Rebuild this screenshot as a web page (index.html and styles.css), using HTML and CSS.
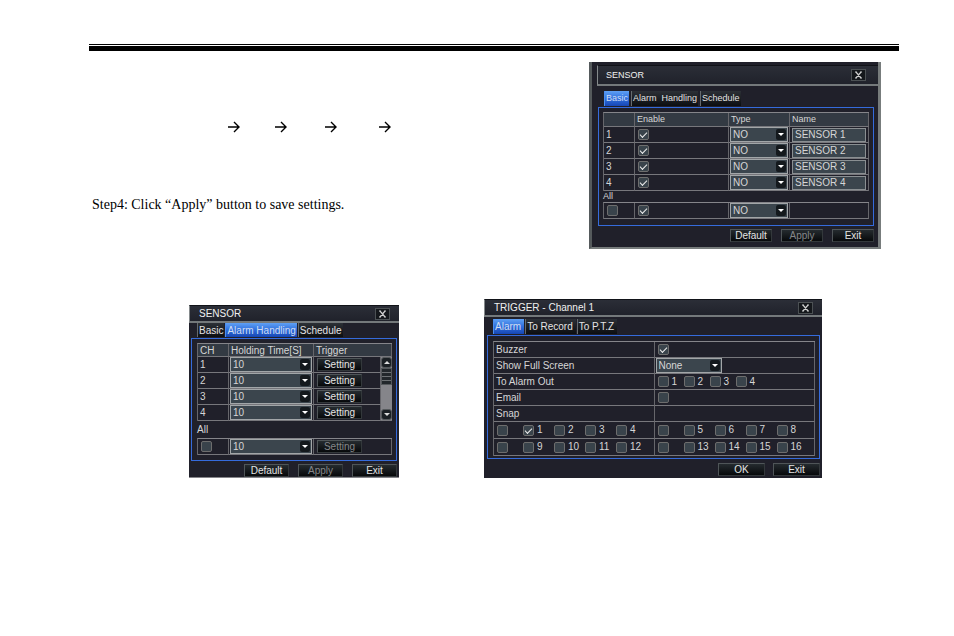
FILE: index.html
```html
<!DOCTYPE html>
<html lang="en">
<head>
    <meta charset="UTF-8">
    <title>Sensor settings</title>
    <link rel="stylesheet" href="styles.css">
</head>
<body>
    <div class="page">
        <hr class="rule">
        <div class="top">
            <div class="text">
                <p class="path">
                    <svg width="13" height="12" viewBox="0 0 13 12"><path d="M0 6H11M6 1L11 6L6 11"/></svg>
                    <svg width="13" height="12" viewBox="0 0 13 12"><path d="M0 6H11M6 1L11 6L6 11"/></svg>
                    <svg width="13" height="12" viewBox="0 0 13 12"><path d="M0 6H11M6 1L11 6L6 11"/></svg>
                    <svg width="13" height="12" viewBox="0 0 13 12"><path d="M0 6H11M6 1L11 6L6 11"/></svg>
                </p>
                <p class="step">Step4: Click “Apply” button to save settings.</p>
            </div>

            <div class="panel basic">
                <div class="title">
                    <span>SENSOR</span>
                    <button class="close" aria-label="Close"><svg width="7" height="8" viewBox="0 0 7 8"><path d="M0 1H2M5 1H7M0 7H2M5 7H7M1 1L6 7M6 1L1 7"/></svg></button>
                </div>
                <div class="body">
                    <div class="tabs">
                        <button class="tab active">Basic</button>
                        <button class="tab">Alarm&nbsp; Handling</button>
                        <button class="tab">Schedule</button>
                    </div>
                    <div class="frame">
                        <table>
                            <colgroup><col class="c-num"><col class="c-enable"><col class="c-type"><col></colgroup>
                            <tr><th></th><th>Enable</th><th>Type</th><th>Name</th></tr>
                            <tr>
                                <td>1</td>
                                <td><input type="checkbox" aria-label="Enable 1" checked></td>
                                <td><span class="pick"><select aria-label="Type 1"><option>NO</option><option>NC</option></select></span></td>
                                <td><input type="text" aria-label="Name 1" value="SENSOR 1"></td>
                            </tr>
                            <tr>
                                <td>2</td>
                                <td><input type="checkbox" aria-label="Enable 2" checked></td>
                                <td><span class="pick"><select aria-label="Type 2"><option>NO</option><option>NC</option></select></span></td>
                                <td><input type="text" aria-label="Name 2" value="SENSOR 2"></td>
                            </tr>
                            <tr>
                                <td>3</td>
                                <td><input type="checkbox" aria-label="Enable 3" checked></td>
                                <td><span class="pick"><select aria-label="Type 3"><option>NO</option><option>NC</option></select></span></td>
                                <td><input type="text" aria-label="Name 3" value="SENSOR 3"></td>
                            </tr>
                            <tr>
                                <td>4</td>
                                <td><input type="checkbox" aria-label="Enable 4" checked></td>
                                <td><span class="pick"><select aria-label="Type 4"><option>NO</option><option>NC</option></select></span></td>
                                <td><input type="text" aria-label="Name 4" value="SENSOR 4"></td>
                            </tr>
                        </table>
                        <label class="all" for="all1">All</label>
                        <table>
                            <colgroup><col class="c-num"><col class="c-enable"><col class="c-type"><col></colgroup>
                            <tr>
                                <td><input type="checkbox" id="all1"></td>
                                <td><input type="checkbox" aria-label="Enable all" checked></td>
                                <td><span class="pick"><select aria-label="Type for all"><option>NO</option><option>NC</option></select></span></td>
                                <td></td>
                            </tr>
                        </table>
                    </div>
                    <div class="actions">
                        <button>Default</button>
                        <button disabled>Apply</button>
                        <button>Exit</button>
                    </div>
                </div>
            </div>
        </div>

        <div class="bottom">
            <div class="panel handling">
                <div class="title">
                    <span>SENSOR</span>
                    <button class="close" aria-label="Close"><svg width="7" height="8" viewBox="0 0 7 8"><path d="M0 1H2M5 1H7M0 7H2M5 7H7M1 1L6 7M6 1L1 7"/></svg></button>
                </div>
                <div class="body">
                    <div class="tabs">
                        <button class="tab">Basic</button>
                        <button class="tab active">Alarm Handling</button>
                        <button class="tab">Schedule</button>
                    </div>
                    <div class="frame">
                        <table>
                            <colgroup><col class="c-num"><col><col class="c-trigger"><col class="c-scroll"></colgroup>
                            <tr><th>CH</th><th>Holding Time[S]</th><th colspan="2">Trigger</th></tr>
                            <tr>
                                <td>1</td>
                                <td><span class="pick"><select aria-label="Holding time 1"><option>10</option><option>20</option></select></span></td>
                                <td><button class="set">Setting</button></td>
                                <td rowspan="4" class="scroll"><div class="bar"><i class="up"></i><i class="thumb"></i><i class="down"></i></div></td>
                            </tr>
                            <tr>
                                <td>2</td>
                                <td><span class="pick"><select aria-label="Holding time 2"><option>10</option><option>20</option></select></span></td>
                                <td><button class="set">Setting</button></td>
                            </tr>
                            <tr>
                                <td>3</td>
                                <td><span class="pick"><select aria-label="Holding time 3"><option>10</option><option>20</option></select></span></td>
                                <td><button class="set">Setting</button></td>
                            </tr>
                            <tr>
                                <td>4</td>
                                <td><span class="pick"><select aria-label="Holding time 4"><option>10</option><option>20</option></select></span></td>
                                <td><button class="set">Setting</button></td>
                            </tr>
                        </table>
                        <label class="all" for="all2">All</label>
                        <table>
                            <colgroup><col class="c-num"><col><col class="c-trigger-wide"></colgroup>
                            <tr>
                                <td><input type="checkbox" id="all2"></td>
                                <td><span class="pick"><select aria-label="Holding time for all"><option>10</option><option>20</option></select></span></td>
                                <td><button class="set" disabled>Setting</button></td>
                            </tr>
                        </table>
                    </div>
                    <div class="actions">
                        <button>Default</button>
                        <button disabled>Apply</button>
                        <button>Exit</button>
                    </div>
                </div>
            </div>

            <div class="panel trigger">
                <div class="title">
                    <span>TRIGGER - Channel 1</span>
                    <button class="close" aria-label="Close"><svg width="7" height="8" viewBox="0 0 7 8"><path d="M0 1H2M5 1H7M0 7H2M5 7H7M1 1L6 7M6 1L1 7"/></svg></button>
                </div>
                <div class="body">
                    <div class="tabs">
                        <button class="tab active">Alarm</button>
                        <button class="tab">To Record</button>
                        <button class="tab">To P.T.Z</button>
                    </div>
                    <div class="frame">
                        <table>
                            <tr><td><label for="buzzer">Buzzer</label></td><td><input type="checkbox" id="buzzer" checked></td></tr>
                            <tr><td><label for="full">Show Full Screen</label></td><td><span class="pick"><select id="full"><option>None</option></select></span></td></tr>
                            <tr>
                                <td>To Alarm Out</td>
                                <td>
                                    <div class="checks out">
                                        <label><input type="checkbox">1</label>
                                        <label><input type="checkbox">2</label>
                                        <label><input type="checkbox">3</label>
                                        <label><input type="checkbox">4</label>
                                    </div>
                                </td>
                            </tr>
                            <tr><td><label for="email">Email</label></td><td><input type="checkbox" id="email"></td></tr>
                            <tr><td>Snap</td><td></td></tr>
                            <tr class="snap">
                                <td>
                                    <div class="checks">
                                        <input type="checkbox" aria-label="Snap 1 to 4">
                                        <label><input type="checkbox" checked>1</label>
                                        <label><input type="checkbox">2</label>
                                        <label><input type="checkbox">3</label>
                                        <label><input type="checkbox">4</label>
                                    </div>
                                </td>
                                <td>
                                    <div class="checks">
                                        <input type="checkbox" aria-label="Snap 5 to 8">
                                        <label><input type="checkbox">5</label>
                                        <label><input type="checkbox">6</label>
                                        <label><input type="checkbox">7</label>
                                        <label><input type="checkbox">8</label>
                                    </div>
                                </td>
                            </tr>
                            <tr class="snap">
                                <td>
                                    <div class="checks">
                                        <input type="checkbox" aria-label="Snap 9 to 12">
                                        <label><input type="checkbox">9</label>
                                        <label><input type="checkbox">10</label>
                                        <label><input type="checkbox">11</label>
                                        <label><input type="checkbox">12</label>
                                    </div>
                                </td>
                                <td>
                                    <div class="checks">
                                        <input type="checkbox" aria-label="Snap 13 to 16">
                                        <label><input type="checkbox">13</label>
                                        <label><input type="checkbox">14</label>
                                        <label><input type="checkbox">15</label>
                                        <label><input type="checkbox">16</label>
                                    </div>
                                </td>
                            </tr>
                        </table>
                    </div>
                    <div class="actions">
                        <button>OK</button>
                        <button>Exit</button>
                    </div>
                </div>
            </div>
        </div>
    </div>
</body>
</html>
```

FILE: styles.css
```css
* {
    box-sizing: border-box;
}
body {
    margin: 0;
    background: #fff;
    color: #000;
    font-family: "Liberation Serif", "Times New Roman", serif;
}
.page {
    padding: 44px 55px 0 89px;
}
.rule {
    height: 7px;
    margin: 0;
    border: 0;
    border-top: 1px solid #000;
    border-bottom: 5px solid #000;
}
.top {
    display: grid;
    grid-template-columns: 500fr 292fr;
    align-items: start;
    padding: 11px 18px 0 0;
}
.bottom {
    display: grid;
    grid-template-columns: 210fr 338fr;
    gap: 85px;
    align-items: end;
    padding: 50px 77px 0 100px;
}

/* instructions */
.text {
    padding: 59px 0 0 3px;
}
.path {
    display: grid;
    grid-template-columns: 47px 50px 54px 13px;
    margin: 0 0 0 136px;
}
.path svg {
    fill: none;
    stroke: #000;
    stroke-width: 1.4;
}
.step {
    margin: 63px 0 0;
    font-size: 14px;
    line-height: 18px;
}

/* windows */
.panel {
    background: #20202a;
    color: #d6d6d6;
    font-family: "Liberation Sans", Arial, sans-serif;
    font-size: 10px;
    line-height: 12px;
}
.panel button, .panel input, .panel select {
    font-family: inherit;
    font-size: 10px;
    line-height: 11px;
    color: inherit;
    margin: 0;
    padding: 0;
    border-radius: 0;
}
.title {
    display: flex;
    align-items: center;
    justify-content: space-between;
    height: 18px;
    padding: 0 9px;
    border-top: 1px solid #111318;
    border-left: 1px solid #858a8c;
    border-bottom: 2px solid #74797b;
    background: linear-gradient(#2b2e37, #20222b);
    color: #f0f0f0;
}
.panel .close {
    display: flex;
    align-items: center;
    justify-content: center;
    width: 15px;
    height: 12px;
    border: 1px solid #4c5154;
    background: #15181c;
}
.close svg {
    fill: none;
    stroke: #d0d0d0;
    stroke-width: 1.2;
}
.tabs {
    display: flex;
    gap: 1px;
    height: 15px;
    padding: 0 0 1px 6px;
}
.panel .tab {
    padding: 0 1px;
    border: 0;
    border-left: 1px solid #666b6e;
    background: linear-gradient(#2c3036, #0c0e11);
    color: #e4e4e4;
    white-space: nowrap;
}
.panel .tab.active {
    border-color: #4c8ff0;
    background: linear-gradient(#5fa0f4, #2f6fdd 50%, #1746b4);
    color: #cfdcf2;
}
.frame {
    padding: 4px 4px 5px 5px;
    border: 1px solid #356bdc;
}
table {
    width: 100%;
    table-layout: fixed;
    border-spacing: 0;
    border-top: 1px solid #85858a;
    border-left: 1px solid #66666b;
}
td, th {
    height: 16px;
    padding: 0;
    border-right: 1px solid #66666b;
    border-bottom: 1px solid #77777c;
    font-weight: normal;
    text-align: left;
    text-indent: 2px;
}
td {
    font-size: 10px;
}
th {
    height: 13px;
    background: #333a43;
    line-height: 11px;
}
.c-num {
    width: 31px;
}
.c-enable {
    width: 94px;
}
.c-type {
    width: 61px;
}
.c-trigger {
    width: 67px;
}
.c-trigger-wide {
    width: 78px;
}
.c-scroll {
    width: 11px;
}
.all {
    display: block;
}

/* controls */
.panel input[type="checkbox"] {
    appearance: none;
    display: block;
    flex: none;
    width: 11px;
    height: 11px;
    margin-left: 3px;
    border: 1px solid #6d6d6d;
    border-radius: 2px;
    background: #39434b;
}
.panel input[type="checkbox"]:checked::after {
    content: "";
    display: block;
    width: 6px;
    height: 3px;
    margin: 2px 0 0 1px;
    border-left: 1px solid #eee;
    border-bottom: 1px solid #eee;
    transform: rotate(-45deg);
}
.panel input[type="text"] {
    display: block;
    width: calc(100% - 4px);
    height: 14px;
    margin-left: 2px;
    padding: 0 2px;
    border: 1px solid #8a8f92;
    background: #3b454d;
    text-indent: 0;
}
.pick {
    position: relative;
    display: block;
    margin: 0 1px;
}
.pick select {
    appearance: none;
    display: block;
    width: 100%;
    height: 15px;
    padding: 0 2px;
    border: 1px solid #a2a6a8;
    background: #3b454d;
    text-indent: 0;
}
.pick::before {
    content: "";
    position: absolute;
    top: 2px;
    right: 2px;
    width: 10px;
    height: 11px;
    border-radius: 2px;
    background: #14191d;
    pointer-events: none;
}
.pick::after {
    content: "";
    position: absolute;
    top: 6px;
    right: 4px;
    border: 3px solid transparent;
    border-top-color: #fff;
    border-bottom: 0;
    pointer-events: none;
}
.actions {
    display: flex;
    justify-content: flex-end;
    gap: 9px;
    padding-top: 3px;
}
.actions button, .panel .set {
    width: 45px;
    height: 13px;
    border: 1px solid #4f5558;
    border-right-color: #33383b;
    border-bottom-color: #33383b;
    background: linear-gradient(#252b2f, #07090b);
    color: #e4e4e4;
}
.panel .set {
    display: block;
    margin-left: 3px;
}
.panel button:disabled {
    color: #85878a;
}
.panel .scroll {
    height: 1px;
    border-right: 0;
}
.bar {
    display: flex;
    flex-direction: column;
    height: 63px;
    background: #85858a;
}
.bar i {
    height: 11px;
    border: 1px solid #55595c;
    border-radius: 3px;
    background: #1b2024;
}
.bar .up::after, .bar .down::after {
    content: "";
    display: block;
    margin: 3px 0 0 2px;
    width: 0;
    border: 3px solid transparent;
    border-top: 0;
    border-bottom-color: #ddd;
}
.bar .down::after {
    border-top: 3px solid #ddd;
    border-bottom: 0;
}
.bar .thumb {
    height: 17px;
    border-radius: 0;
    background: repeating-linear-gradient(#22272b 0 3px, #6d7174 3px 4px);
}
.bar .down {
    margin-top: auto;
}

/* basic tab */
.basic {
    padding: 3px 0 5px;
    border: solid #777c7c;
    border-width: 0 3px 2px;
    border-left-color: #555a5c;
    font-size: 9px;
}
.basic .title {
    height: 21px;
    margin: 0 0 0 5px;
    padding: 0 12px 0 8px;
}
.basic .body {
    padding: 5px 4px 0 6px;
}
.basic .tabs {
    height: 16px;
    gap: 2px;
}
.basic .tab {
    font-size: 9px;
}
.basic .frame {
    padding: 4px 4px 6px;
}
.basic th {
    height: 14px;
}
.basic .all {
    line-height: 11px;
}
.basic .actions button {
    width: 42px;
}

/* alarm handling tab */
.handling {
    border-bottom: 1px solid #85858a;
}
.handling .body {
    padding: 0 2px;
}
.handling .all {
    line-height: 17px;
}

/* trigger window */
.trigger .body {
    padding: 2px 2px 2px 3px;
}
.trigger .tabs {
    height: 16px;
}
.trigger .tab {
    padding: 0 3px 0 1px;
}
.trigger .frame {
    padding: 5px 4px 2px 5px;
}
.trigger .snap td {
    height: 17px;
}
.trigger .actions {
    gap: 8px;
    padding-top: 4px;
}
.trigger .actions button {
    width: 47px;
}
.trigger .pick {
    width: 66px;
}
.checks {
    display: grid;
    grid-template-columns: 26px repeat(4, 31px);
    text-indent: 0;
}
.checks.out {
    grid-template-columns: repeat(4, 26px);
}
.checks label, .snap .checks {
    align-items: center;
}
.checks label {
    display: flex;
    gap: 3px;
}
```
